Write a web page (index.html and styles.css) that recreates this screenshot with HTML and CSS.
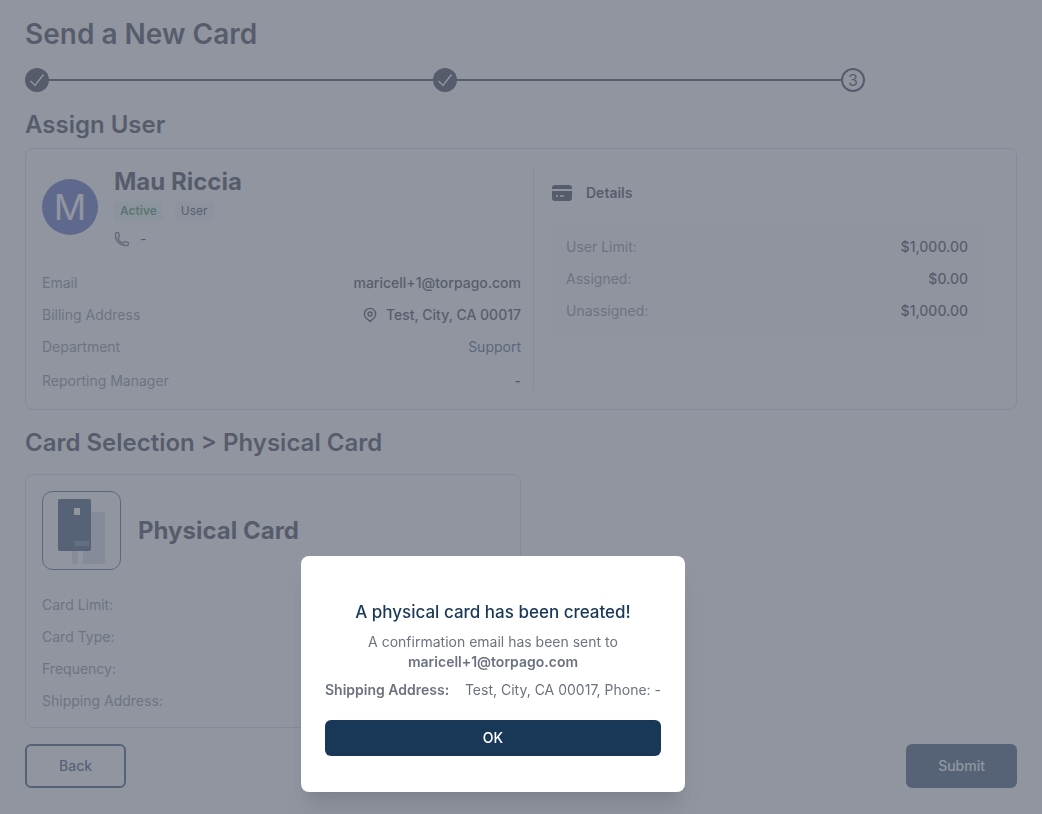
FILE: index.html
```html
<!DOCTYPE html>
<html lang="en">
<head>
<meta charset="UTF-8">
<meta name="viewport" content="width=device-width, initial-scale=1">
<title>Send a New Card</title>
<link rel="stylesheet" href="styles.css">
</head>
<body>
<main class="page">
    <h1>Send a New Card</h1>
    <ol class="steps">
        <li class="step done">
            <svg class="check" viewBox="0 0 24 24" aria-label="Step 1 done"><path d="M5.5 13 L10 17.5 L18.5 6.5"/></svg>
        </li>
        <li class="line"></li>
        <li class="step done">
            <svg class="check" viewBox="0 0 24 24" aria-label="Step 2 done"><path d="M5.5 13 L10 17.5 L18.5 6.5"/></svg>
        </li>
        <li class="line"></li>
        <li class="step">3</li>
    </ol>

    <h2>Assign User</h2>
    <section class="card user-card">
        <div class="user">
            <div class="user-head">
                <div class="avatar">M</div>
                <div>
                    <h3>Mau Riccia</h3>
                    <div class="badges">
                        <span class="badge active">Active</span>
                        <span class="badge">User</span>
                    </div>
                    <div class="phone">
                        <svg class="phone-icon" viewBox="0 0 24 24"><path d="M2.25 6.75c0 8.284 6.716 15 15 15h2.25a2.25 2.25 0 0 0 2.25-2.25v-1.372c0-.516-.351-.966-.852-1.091l-4.423-1.106c-.44-.11-.902.055-1.173.417l-.97 1.293c-.282.376-.769.542-1.21.38a12.035 12.035 0 0 1-7.143-7.143c-.162-.441.004-.928.38-1.21l1.293-.97c.363-.271.527-.734.417-1.173L6.963 3.102a1.125 1.125 0 0 0-1.091-.852H4.5A2.25 2.25 0 0 0 2.25 4.5v2.25Z"/></svg>
                        <span>-</span>
                    </div>
                </div>
            </div>
            <dl class="rows">
                <div><dt>Email</dt><dd>maricell+1@torpago.com</dd></div>
                <div>
                    <dt>Billing Address</dt>
                    <dd class="address">
                        <svg class="pin-icon" viewBox="0 0 16 16"><path d="M8 14.5 L4 10.9 A5.6 5.6 0 1 1 12 10.9 Z"/><circle cx="8" cy="7" r="2"/></svg>
                        Test, City, CA 00017
                    </dd>
                </div>
                <div><dt>Department</dt><dd class="department">Support</dd></div>
                <div class="manager"><dt>Reporting Manager</dt><dd>-</dd></div>
            </dl>
        </div>
        <div class="details">
            <h4>
                <svg class="card-icon" viewBox="0 0 20 16"><path d="M0 4 V3 A3 3 0 0 1 3 0 H17 A3 3 0 0 1 20 3 V4 Z M0 6 H20 V13 A3 3 0 0 1 17 16 H3 A3 3 0 0 1 0 13 Z"/><path class="marks" d="M4 11 H6 M8 11 H12"/></svg>
                Details
            </h4>
            <dl class="rows limits">
                <div><dt>User Limit:</dt><dd>$1,000.00</dd></div>
                <div><dt>Assigned:</dt><dd>$0.00</dd></div>
                <div><dt>Unassigned:</dt><dd>$1,000.00</dd></div>
            </dl>
        </div>
    </section>

    <h2 class="selection">Card Selection &gt; Physical Card</h2>
    <section class="card physical">
        <div class="physical-head">
            <svg class="card-art" viewBox="0 0 79 79">
                <rect class="frame" x="0.5" y="0.5" width="78" height="78" rx="10"/>
                <path class="back-card" d="M30 21 H61 A2 2 0 0 1 63 23 V71 A2 2 0 0 1 61 73 H41 V50 H36 V73 H32 A2 2 0 0 1 30 71 Z"/>
                <rect class="front-card" x="16" y="8" width="33" height="52" rx="2"/>
                <rect class="chip" x="32" y="17" width="6" height="7"/>
                <rect class="stripe" x="32" y="50" width="15" height="5"/>
            </svg>
            <h3>Physical Card</h3>
        </div>
        <dl class="rows">
            <div><dt>Card Limit:</dt><dd></dd></div>
            <div><dt>Card Type:</dt><dd></dd></div>
            <div><dt>Frequency:</dt><dd></dd></div>
            <div><dt>Shipping Address:</dt><dd></dd></div>
        </dl>
    </section>

    <div class="actions">
        <button type="button" class="back">Back</button>
        <button type="submit" class="submit">Submit</button>
    </div>
</main>

<div class="overlay">
    <div class="modal" role="dialog" aria-modal="true" aria-labelledby="modal-title">
        <h2 id="modal-title">A physical card has been created!</h2>
        <p>A confirmation email has been sent to <strong>maricell+1@torpago.com</strong></p>
        <div class="shipping">
            <strong>Shipping Address:</strong>
            <span>Test, City, CA 00017, Phone: -</span>
        </div>
        <button type="button" class="ok">OK</button>
    </div>
</div>
</body>
</html>
```
FILE: styles.css
```css
* {
    box-sizing: border-box;
}

body {
    margin: 0;
    font-family: Inter, "Liberation Sans", sans-serif;
    font-size: 14px;
    line-height: 20px;
    color: #1c1c30;
    background: #fff;
}

h1, h2, h3, h4, p, dl, dd, ol {
    margin: 0;
    padding: 0;
}

svg {
    display: block;
    flex: none;
    fill: none;
    stroke: currentColor;
}

button {
    font: inherit;
    font-weight: 500;
    cursor: pointer;
}

.page {
    padding: 16px 25px;
}

h1 {
    font-size: 28px;
    line-height: 36px;
    font-weight: 600;
}

h2, h3 {
    font-size: 24px;
    line-height: 32px;
    font-weight: 600;
}

h3 {
    font-weight: 700;
}

/* progress */
.steps {
    display: flex;
    align-items: center;
    max-width: 840px;
    margin: 16px 0 17px;
    list-style: none;
}

.step {
    display: flex;
    justify-content: center;
    align-items: center;
    width: 24px;
    height: 24px;
    border: 2px solid #1c1c30;
    border-radius: 50%;
    font-size: 16px;
}

.step.done {
    border: 0;
    background: #1c1c30;
    color: #fff;
}

.line {
    flex: 1;
    height: 2px;
    background: #1c1c30;
}

.check {
    width: 24px;
    height: 24px;
    stroke-width: 1.4;
}

/* cards */
.card {
    border: 1px solid #d0d4da;
    border-radius: 8px;
    padding: 16px;
}

.user-card {
    display: grid;
    grid-template-columns: 492fr 466fr;
    margin-top: 7px;
    padding: 19px 16px 18px;
}

.user {
    padding-right: 12px;
    border-right: 1px solid #dce0e4;
}

.user-head {
    display: flex;
    align-items: center;
    gap: 16px;
    height: 78px;
}

.avatar {
    display: flex;
    justify-content: center;
    align-items: center;
    width: 56px;
    height: 56px;
    border-radius: 50%;
    background: #3f51b5;
    color: #fff;
    font-size: 36px;
}

.badges {
    display: flex;
    gap: 12px;
    margin: 3px 0 8px;
}

.badge {
    padding: 0 6px;
    border-radius: 4px;
    background: #f3f3f6;
    font-size: 12px;
}

.badge.active {
    background: #ecf8f2;
    color: #2b7f3e;
    font-weight: 600;
}

.phone {
    display: flex;
    align-items: center;
    gap: 10px;
}

.phone-icon {
    width: 16px;
    height: 16px;
    color: #4b5060;
    stroke-width: 2;
}

.rows > div {
    display: flex;
    justify-content: space-between;
    align-items: center;
    height: 32px;
}

.rows dt {
    color: #757985;
}

.rows dd {
    font-weight: 500;
}

.user .rows {
    margin-top: 21px;
}

.user .rows .manager {
    align-items: flex-end;
    height: 28px;
}

.address {
    display: flex;
    align-items: center;
    gap: 8px;
}

.pin-icon {
    width: 16px;
    height: 16px;
    stroke-width: 1.4;
}

.rows .department {
    color: #254a70;
    font-weight: 400;
}

.details {
    padding: 15px 16px 0;
}

.details h4 {
    display: flex;
    align-items: center;
    gap: 14px;
    padding-left: 2px;
    font-size: 14px;
    font-weight: 600;
}

.card-icon {
    width: 20px;
    height: 16px;
    fill: currentColor;
    stroke: none;
}

.card-icon .marks {
    stroke: #fff;
    stroke-width: 1.4;
}

.limits {
    margin-top: 18px;
    padding: 10px 16px;
    border-radius: 4px;
    background: #fafafa;
}

/* selected card */
.selection {
    margin-top: 17px;
}

.physical {
    width: 50%;
    margin-top: 15px;
    padding-bottom: 10px;
}

.physical-head {
    display: flex;
    align-items: center;
    gap: 17px;
    margin-bottom: 19px;
}

.card-art {
    width: 79px;
    height: 79px;
    stroke: none;
}

.frame {
    stroke: #254a70;
}

.back-card {
    fill: #d3d8df;
}

.front-card {
    fill: #193a59;
}

.chip {
    fill: #fff;
}

.stripe {
    fill: #506b84;
}

.actions {
    display: flex;
    justify-content: space-between;
    margin-top: 16px;
}

.actions button {
    height: 44px;
    padding: 0 32px;
    border: 2px solid #193857;
    border-radius: 6px;
    background: #fff;
    color: #193857;
}

.actions .submit {
    padding: 0 30px;
    background: #193857;
    color: #fff;
}

/* confirmation */
.overlay {
    position: fixed;
    inset: 0;
    display: flex;
    justify-content: center;
    align-items: flex-end;
    padding: 22px 56px 22px 0;
    background: rgba(107, 114, 128, 0.75);
}

.modal {
    width: 384px;
    max-width: 100%;
    padding: 44px 24px 36px;
    border-radius: 8px;
    background: #fff;
    color: #6b7280;
    text-align: center;
    box-shadow: 0 20px 25px -5px rgba(0, 0, 0, 0.1), 0 10px 10px -5px rgba(0, 0, 0, 0.04);
}

.modal h2 {
    margin-bottom: 8px;
    color: #193857;
    font-size: 17px;
    line-height: 24px;
    font-weight: 500;
}

.modal p {
    padding: 0 40px;
}

.modal strong {
    font-weight: 600;
}

.shipping {
    display: flex;
    justify-content: space-between;
    margin: 8px 0 20px;
}

.ok {
    display: block;
    width: 100%;
    height: 36px;
    border: 0;
    border-radius: 6px;
    background: #193857;
    color: #fff;
}
```
